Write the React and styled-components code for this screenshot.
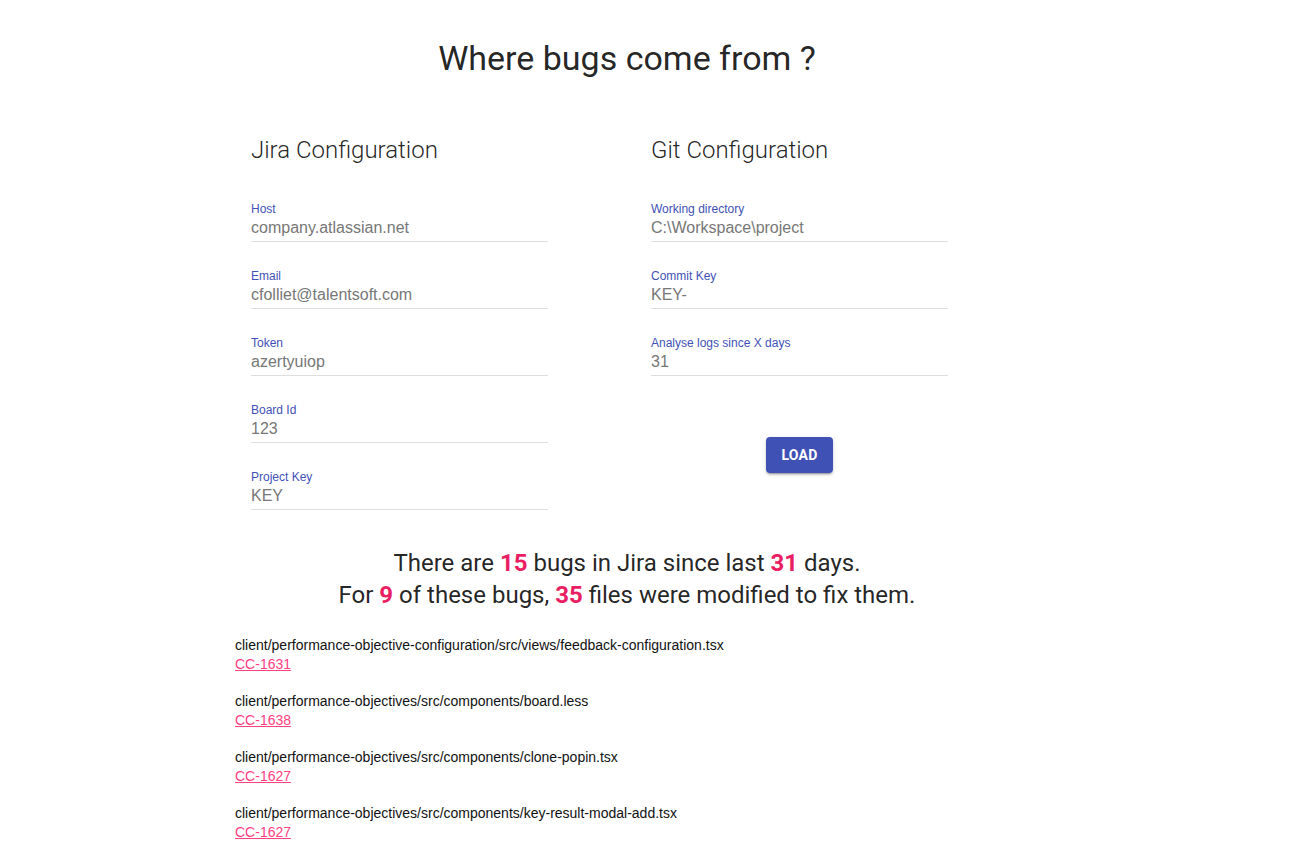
import React from "react";
import styled, { createGlobalStyle } from "styled-components";

const Global = createGlobalStyle`
  html, body { margin: 0; padding: 0; background: #fff; }
  body { font-family: Roboto, "Liberation Sans", sans-serif; color: rgba(0,0,0,0.87); }
  * { box-sizing: border-box; }
`;

const Page = styled.div`
  width: 1254px;
  padding-top: 38px;
  padding-bottom: 20px;
`;

const Title = styled.h1`
  margin: 0;
  font-family: Roboto, sans-serif;
  font-size: 34px;
  font-weight: 400;
  line-height: 40px;
  text-align: center;
  color: rgba(0,0,0,0.87);
`;

const Columns = styled.div`
  display: grid;
  grid-template-columns: 400px 400px;
  margin: 58px 0 0 251px;
`;

const Column = styled.section`
  display: flex;
  flex-direction: column;
  width: 297px;
`;

const Heading = styled.h2`
  margin: 0 0 38px;
  font-family: Roboto, sans-serif;
  font-size: 24px;
  font-weight: 300;
  line-height: 28px;
  color: rgba(0,0,0,0.87);
`;

const Fields = styled.div`
  display: flex;
  flex-direction: column;
  gap: 27px;
`;

const Field = styled.label`
  display: flex;
  flex-direction: column;
  width: 297px;
`;

const Label = styled.span`
  font-family: "Liberation Sans", Arial, sans-serif;
  font-size: 12px;
  line-height: 14px;
  height: 14px;
  margin-bottom: 3px;
  color: #3f51b5;
`;

const Input = styled.input`
  box-sizing: content-box;
  display: block;
  width: 297px;
  height: 18px;
  padding: 0 0 4px;
  margin: 0;
  border: none;
  border-bottom: 1px solid #dedede;
  outline: none;
  background: transparent;
  font-family: "Liberation Sans", Arial, sans-serif;
  font-size: 16px;
  line-height: 18px;
  color: #777;
`;

const ButtonRow = styled.div`
  display: flex;
  justify-content: center;
  margin-top: 61px;
`;

const Button = styled.button`
  min-width: 64px;
  height: 36px;
  padding: 0 16px;
  border: none;
  border-radius: 4px;
  background: #3f51b5;
  color: #fff;
  font-family: Roboto, sans-serif;
  font-size: 14px;
  font-weight: 700;
  letter-spacing: 0.2px;
  text-transform: uppercase;
  box-shadow: 0 3px 1px -2px rgba(0,0,0,0.2), 0 2px 2px 0 rgba(0,0,0,0.14), 0 1px 5px 0 rgba(0,0,0,0.12);
  cursor: pointer;
`;

const Stats = styled.div`
  margin-top: 37px;
  text-align: center;
  font-family: Roboto, sans-serif;
  font-size: 24px;
  line-height: 32px;
  color: rgba(0,0,0,0.87);
`;

const StatLine = styled.div``;

const Num = styled.b`
  font-weight: 700;
  color: #e91e63;
`;

const FileList = styled.ul`
  list-style: none;
  margin: 26px 0 0 235px;
  padding: 0;
  display: flex;
  flex-direction: column;
  gap: 20px;
  font-family: "Liberation Sans", Arial, sans-serif;
  font-size: 14px;
  line-height: 17px;
`;

const FileItem = styled.li`
  display: flex;
  flex-direction: column;
  align-items: flex-start;
  gap: 2px;
`;

const Path = styled.span`
  color: #111;
`;

const IssueLink = styled.a`
  color: #ff4081;
  text-decoration: underline;
`;

const jira = [
  ["Host", "company.atlassian.net"],
  ["Email", "cfolliet@talentsoft.com"],
  ["Token", "azertyuiop"],
  ["Board Id", "123"],
  ["Project Key", "KEY"],
];

const git = [
  ["Working directory", "C:\\Workspace\\project"],
  ["Commit Key", "KEY-"],
  ["Analyse logs since X days", "31"],
];

const files = [
  ["client/performance-objective-configuration/src/views/feedback-configuration.tsx", "CC-1631"],
  ["client/performance-objectives/src/components/board.less", "CC-1638"],
  ["client/performance-objectives/src/components/clone-popin.tsx", "CC-1627"],
  ["client/performance-objectives/src/components/key-result-modal-add.tsx", "CC-1627"],
];

function FieldList({ items }) {
  return (
    <Fields>
      {items.map(([label, value]) => (
        <Field key={label}>
          <Label>{label}</Label>
          <Input readOnly defaultValue={value} />
        </Field>
      ))}
    </Fields>
  );
}

export default function App() {
  return (
    <>
      <Global />
      <Page>
        <Title>Where bugs come from ?</Title>
        <Columns>
          <Column>
            <Heading>Jira Configuration</Heading>
            <FieldList items={jira} />
          </Column>
          <Column>
            <Heading>Git Configuration</Heading>
            <FieldList items={git} />
            <ButtonRow>
              <Button>Load</Button>
            </ButtonRow>
          </Column>
        </Columns>
        <Stats>
          <StatLine>
            There are <Num>15</Num> bugs in Jira since last <Num>31</Num> days.
          </StatLine>
          <StatLine>
            For <Num>9</Num> of these bugs, <Num>35</Num> files were modified to fix them.
          </StatLine>
        </Stats>
        <FileList>
          {files.map(([path, key], i) => (
            <FileItem key={i}>
              <Path>{path}</Path>
              <IssueLink href="#">{key}</IssueLink>
            </FileItem>
          ))}
        </FileList>
      </Page>
    </>
  );
}
